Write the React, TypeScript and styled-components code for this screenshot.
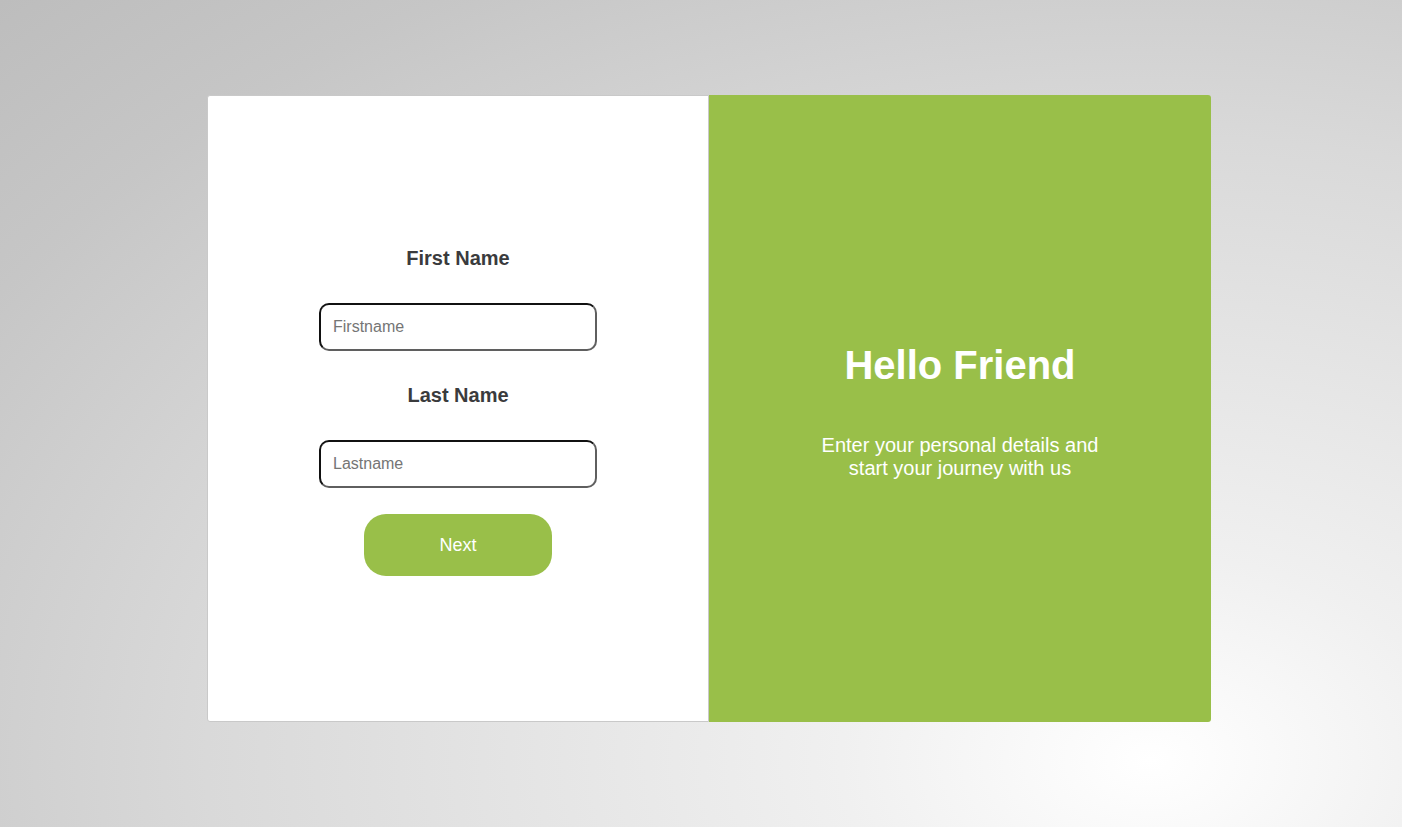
import React from "react";
import styled, { createGlobalStyle } from "styled-components";

const GlobalStyle = createGlobalStyle`
  html, body {
    margin: 0;
    padding: 0;
    height: 100%;
  }
  body {
    font-family: "Liberation Sans", Arial, sans-serif;
  }
  #root {
    min-height: 100%;
  }
`;

const Page = styled.div`
  min-height: 827px;
  box-sizing: border-box;
  padding: 95px 0 0 207px;
  background: radial-gradient(
    farthest-corner at 1150px 760px,
    #ffffff 0%,
    #f0f0f0 19%,
    #d9d9d9 58%,
    #c6c6c6 83%,
    #bdbdbd 100%
  );
  display: flex;
  align-items: flex-start;
`;

const Card = styled.div`
  display: flex;
  width: 1004px;
  height: 627px;
`;

const FormPanel = styled.div`
  box-sizing: border-box;
  width: 502px;
  height: 627px;
  background: #ffffff;
  border: 1px solid #c9c9c9;
  border-radius: 3px 0 0 3px;
  display: flex;
  flex-direction: column;
  align-items: center;
  padding-top: 151px;
`;

const Label = styled.label`
  font-size: 20px;
  line-height: 23px;
  font-weight: bold;
  color: #3a3b3d;
  margin-bottom: 33px;
`;

const Input = styled.input<{ $gap: number }>`
  box-sizing: border-box;
  width: 278px;
  height: 48px;
  border: 2px solid;
  border-color: #111111 #5f5f5f #5f5f5f #111111;
  border-radius: 10px;
  padding: 0 12px;
  font-family: "Liberation Sans", Arial, sans-serif;
  font-size: 16px;
  color: #222;
  outline: none;
  margin-bottom: ${(p) => p.$gap}px;

  &::placeholder {
    color: #757575;
  }
`;

const NextButton = styled.button`
  width: 188px;
  height: 62px;
  border: none;
  border-radius: 22px;
  background: #99bf49;
  color: #ffffff;
  font-family: "Liberation Sans", Arial, sans-serif;
  font-size: 18px;
  cursor: pointer;
`;

const WelcomePanel = styled.div`
  box-sizing: border-box;
  width: 502px;
  height: 627px;
  background: #99bf49;
  border-radius: 0 3px 3px 0;
  display: flex;
  flex-direction: column;
  align-items: center;
  padding-top: 247px;
  color: #ffffff;
  text-align: center;
`;

const Heading = styled.h1`
  margin: 0 0 46px;
  font-size: 40px;
  line-height: 46px;
  font-weight: bold;
`;

const Subtitle = styled.p`
  margin: 0;
  max-width: 290px;
  font-size: 20px;
  line-height: 23px;
`;

export default function App() {
  return (
    <>
      <GlobalStyle />
      <Page>
        <Card>
          <FormPanel>
            <Label htmlFor="firstname">First Name</Label>
            <Input id="firstname" placeholder="Firstname" $gap={33} />
            <Label htmlFor="lastname">Last Name</Label>
            <Input id="lastname" placeholder="Lastname" $gap={26} />
            <NextButton>Next</NextButton>
          </FormPanel>
          <WelcomePanel>
            <Heading>Hello Friend</Heading>
            <Subtitle>Enter your personal details and start your journey with us</Subtitle>
          </WelcomePanel>
        </Card>
      </Page>
    </>
  );
}
